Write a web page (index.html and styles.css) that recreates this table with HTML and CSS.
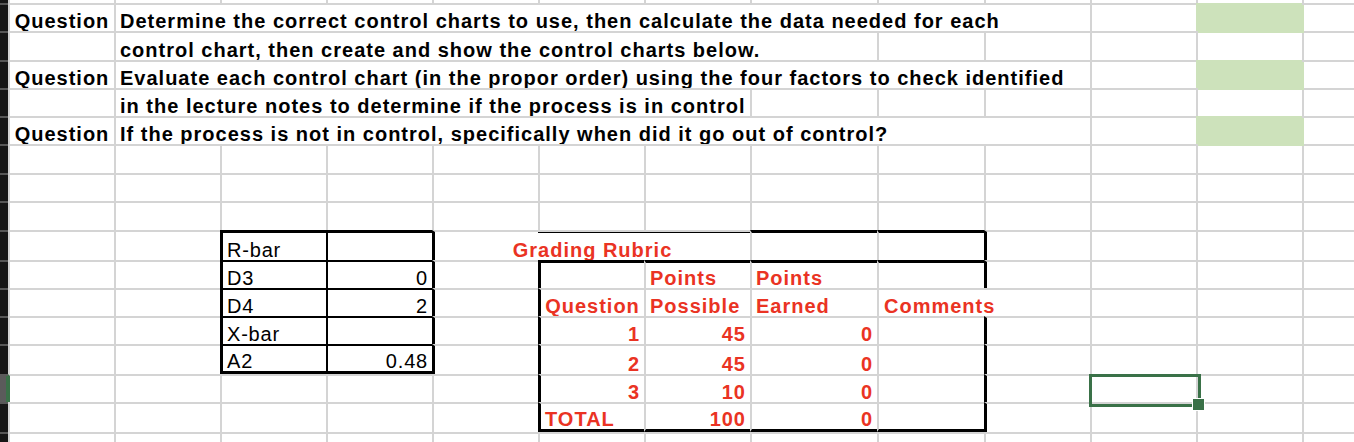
FILE: index.html
```html
<!DOCTYPE html>
<html>
<head>
<meta charset="utf-8">
<link rel="stylesheet" href="styles.css">
</head>
<body>
<div class="sheet">
  <div class="row r0 first">
    <div class="h"></div><div class="c"></div><div class="c"></div><div class="c"></div><div class="c"></div><div class="c"></div><div class="c"></div><div class="c"></div><div class="c"></div><div class="c"></div><div class="c"></div><div class="c"></div><div class="c"></div><div class="c"></div>
  </div>
  <div class="row r1">
    <div class="h"></div>
    <div class="c b ct">Question</div>
    <div class="c b s9">Determine the correct control charts to use, then calculate the data needed for each</div>
    <div class="c"></div><div class="c green"></div><div class="c"></div>
  </div>
  <div class="row r2">
    <div class="h"></div>
    <div class="c"></div>
    <div class="c b s7">control chart, then create and show the control charts below.</div>
    <div class="c"></div><div class="c"></div><div class="c"></div><div class="c"></div><div class="c"></div>
  </div>
  <div class="row r3">
    <div class="h"></div>
    <div class="c b ct">Question</div>
    <div class="c b s9">Evaluate each control chart (in the propor order) using the four factors to check identified</div>
    <div class="c"></div><div class="c green"></div><div class="c"></div>
  </div>
  <div class="row r4">
    <div class="h"></div>
    <div class="c"></div>
    <div class="c b s6">in the lecture notes to determine if the process is in control</div>
    <div class="c"></div><div class="c"></div><div class="c"></div><div class="c"></div><div class="c"></div><div class="c"></div>
  </div>
  <div class="row r5">
    <div class="h"></div>
    <div class="c b ct">Question</div>
    <div class="c b s9">If the process is not in control, specifically when did it go out of control?</div>
    <div class="c"></div><div class="c green"></div><div class="c"></div>
  </div>
  <div class="row r6">
    <div class="h"></div><div class="c"></div><div class="c"></div><div class="c"></div><div class="c"></div><div class="c"></div><div class="c"></div><div class="c"></div><div class="c"></div><div class="c"></div><div class="c"></div><div class="c"></div><div class="c"></div><div class="c"></div>
  </div>
  <div class="row r7">
    <div class="h"></div><div class="c"></div><div class="c"></div><div class="c"></div><div class="c"></div><div class="c"></div><div class="c"></div><div class="c"></div><div class="c"></div><div class="c"></div><div class="c"></div><div class="c"></div><div class="c"></div><div class="c"></div>
  </div>
  <div class="row r8">
    <div class="h"></div><div class="c"></div><div class="c"></div><div class="c"></div><div class="c"></div><div class="c"></div><div class="c"></div><div class="c"></div><div class="c"></div><div class="c"></div><div class="c"></div><div class="c"></div><div class="c"></div><div class="c"></div>
  </div>
  <div class="row r9">
    <div class="h"></div><div class="c"></div><div class="c"></div>
    <div class="c t-l t-top">R-bar</div>
    <div class="c t-in t-top"></div>
    <div class="c s3 t-r b rd ct title">Grading Rubric</div>
    <div class="c k-top"></div>
    <div class="c k-top"></div>
    <div class="c k-r"></div>
    <div class="c"></div><div class="c"></div><div class="c"></div>
  </div>
  <div class="row r10">
    <div class="h"></div><div class="c"></div><div class="c"></div>
    <div class="c t-l t-mid">D3</div>
    <div class="c t-in t-mid rt">0</div>
    <div class="c t-r"></div>
    <div class="c k-l k-top"></div>
    <div class="c k-top b rd">Points</div>
    <div class="c k-top b rd">Points</div>
    <div class="c k-top"></div>
    <div class="c k-r"></div>
    <div class="c"></div><div class="c"></div><div class="c"></div>
  </div>
  <div class="row r11">
    <div class="h"></div><div class="c"></div><div class="c"></div>
    <div class="c t-l t-mid">D4</div>
    <div class="c t-in t-mid rt">2</div>
    <div class="c t-r"></div>
    <div class="c k-l b rd ct">Question</div>
    <div class="c b rd">Possible</div>
    <div class="c b rd">Earned</div>
    <div class="c s2 b rd comments">Comments</div>
    <div class="c"></div><div class="c"></div><div class="c"></div>
  </div>
  <div class="row r12">
    <div class="h"></div><div class="c"></div><div class="c"></div>
    <div class="c t-l t-mid">X-bar</div>
    <div class="c t-in t-mid"></div>
    <div class="c t-r"></div>
    <div class="c k-l b rd rt">1</div>
    <div class="c b rd rt">45</div>
    <div class="c b rd rt">0</div>
    <div class="c"></div>
    <div class="c k-r"></div>
    <div class="c"></div><div class="c"></div><div class="c"></div>
  </div>
  <div class="row r13">
    <div class="h"></div><div class="c"></div><div class="c"></div>
    <div class="c t-l t-mid t-bot">A2</div>
    <div class="c t-in t-mid t-bot rt">0.48</div>
    <div class="c t-r"></div>
    <div class="c k-l b rd rt">2</div>
    <div class="c b rd rt">45</div>
    <div class="c b rd rt">0</div>
    <div class="c"></div>
    <div class="c k-r"></div>
    <div class="c"></div><div class="c"></div><div class="c"></div>
  </div>
  <div class="row r14">
    <div class="h active"></div><div class="c active-a"></div><div class="c"></div>
    <div class="c"></div>
    <div class="c"></div>
    <div class="c"></div>
    <div class="c k-l b rd rt">3</div>
    <div class="c b rd rt">10</div>
    <div class="c b rd rt">0</div>
    <div class="c"></div>
    <div class="c k-r"></div>
    <div class="c selected"><span class="sel"></span><span class="handle"></span></div>
    <div class="c"></div><div class="c"></div>
  </div>
  <div class="row r15">
    <div class="h"></div><div class="c"></div><div class="c"></div>
    <div class="c"></div>
    <div class="c"></div>
    <div class="c"></div>
    <div class="c k-l k-bot b rd">TOTAL</div>
    <div class="c k-bot b rd rt">100</div>
    <div class="c k-bot b rd rt">0</div>
    <div class="c k-bot"></div>
    <div class="c k-r"></div>
    <div class="c"></div><div class="c"></div><div class="c"></div>
  </div>
  <div class="row r16">
    <div class="h"></div><div class="c"></div><div class="c"></div><div class="c"></div><div class="c"></div><div class="c"></div><div class="c"></div><div class="c"></div><div class="c"></div><div class="c"></div><div class="c"></div><div class="c"></div><div class="c"></div><div class="c"></div>
  </div>
</div>
</body>
</html>
```

FILE: styles.css
```css
* {
  box-sizing: border-box;
}

html, body {
  margin: 0;
  padding: 0;
  background: #ffffff;
}

body {
  font-family: "Liberation Sans", Arial, Helvetica, sans-serif;
  font-size: 20px;
  letter-spacing: 0.8px;
  color: #000000;
  overflow: hidden;
}

.sheet {
  width: 1354px;
  height: 442px;
  overflow: hidden;
}

.row {
  display: grid;
  grid-template-columns: 8px repeat(7, 106px) 127px 107px repeat(3, 106px) 52px;
}

.r0 { height: 3px; }
.r1 { height: 28px; }
.r2 { height: 29px; }
.r3 { height: 28px; }
.r4 { height: 28px; }
.r5 { height: 28px; }
.r6 { height: 29px; }
.r7 { height: 28px; }
.r8 { height: 29px; }
.r9 { height: 30px; }
.r10 { height: 28px; }
.r11 { height: 28px; }
.r12 { height: 28px; }
.r13 { height: 30px; }
.r14 { height: 28px; }
.r15 { height: 30px; }
.r16 { height: 10px; }

.h {
  background: #161616;
  border-top: 2px solid #575757;
}

.c {
  display: flex;
  align-items: flex-end;
  min-width: 0;
  padding: 0 4px;
  line-height: 20px;
  white-space: nowrap;
  border-left: 2px solid #d4d4d4;
  border-top: 2px solid #d4d4d4;
}

.first .h,
.first .c {
  border-top: 0;
}

.s2 { grid-column: span 2; }
.s3 { grid-column: span 3; }
.s6 { grid-column: span 6; }
.s7 { grid-column: span 7; }
.s9 { grid-column: span 9; }

.b {
  font-weight: bold;
  letter-spacing: 1px;
}
.rd { color: #ea3323; }
.rt { justify-content: flex-end; }
.ct { justify-content: center; }

.green {
  position: relative;
  z-index: 1;
  background: #cde2bb;
  border-color: #cde2bb;
  box-shadow: 2px 2px 0 #cde2bb;
}

/* left factor table */
.t-l { border-left: 3px solid #000; }
.t-in { border-left: 2px solid #000; }
.t-top { border-top: 3px solid #000; }
.t-mid { border-top: 2px solid #000; }
.t-bot { border-bottom: 3px solid #000; }
.t-r { border-left: 3px solid #000; }

/* grading rubric */
.title {
  background: linear-gradient(#000, #000) no-repeat right -2px top -2px / 214px 3px;
  border-top-color: #d4d4d4;
}
.k-top { border-top: 3px solid #000; }
.k-l { border-left: 3px solid #000; }
.k-r { border-left: 3px solid #000; }
.k-bot { border-bottom: 3px solid #000; }

.comments {
  background: #ffffff;
  padding-left: 5px;
}

/* row header for active row */
.h.active {
  background: #5b5b5b;
  border-top-color: #5b5b5b;
  box-shadow: inset -2px 0 0 #3a7148;
}
.active-a {
  border-left-color: #3a7148;
}

/* selected cell */
.selected {
  position: relative;
}
.sel {
  position: absolute;
  left: -3px;
  top: -2px;
  width: 112px;
  height: 33px;
  border: 3px solid #3a7148;
}
.handle {
  position: absolute;
  left: 100px;
  top: 22px;
  width: 13px;
  height: 13px;
  background: #3a7148;
  border: 1px solid #ffffff;
}
```
